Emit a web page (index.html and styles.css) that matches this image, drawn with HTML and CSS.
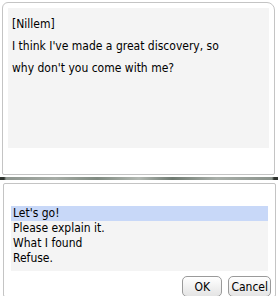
FILE: index.html
```html
<!DOCTYPE html>
<html lang="en">
<head>
    <meta charset="UTF-8">
    <title>Dialogue</title>
    <link rel="stylesheet" href="styles.css">
</head>
<body>
    <div class="message-panel">
        <div class="message-text">
            <p>[Nillem]</p>
            <p>I think I've made a great discovery, so</p>
            <p>why don't you come with me?</p>
        </div>
    </div>

    <div class="divider"></div>

    <div class="choice-panel">
        <ul class="choices">
            <li class="selected">Let's go!</li>
            <li>Please explain it.</li>
            <li>What I found</li>
            <li>Refuse.</li>
        </ul>
        <div class="buttons">
            <button class="ok">OK</button>
            <button>Cancel</button>
        </div>
    </div>
</body>
</html>
```

FILE: styles.css
```css
body {
    margin: 0;
    width: 278px;
    height: 296px;
    overflow: hidden;
    background: #ffffff;
    font-family: "DejaVu Sans Condensed", "DejaVu Sans", sans-serif;
    font-size: 12px;
    color: #000000;
}

.message-panel {
    margin: 2px 3px 0 2px;
    height: 173px;
    box-sizing: border-box;
    border: 1px solid #c4c4c4;
    border-radius: 6px 8px 2px 2px;
    padding: 5px 5px 0 5px;
}

.message-text {
    background: #f4f4f4;
    height: 140px;
    padding: 5px 4px 0 4px;
    box-sizing: border-box;
}

.message-text p {
    margin: 0;
    line-height: 22px;
}

.divider {
    height: 3px;
    margin: 2px 0 3px 0;
    background: linear-gradient(90deg, #2e332e 0, #2e332e 4px, #8e968f 6px, #a6aca6 20%, #7f8a80 35%, #b2b8b2 50%, #6f7a71 62%, #a9afa9 78%, #8b938c calc(100% - 6px), #2e332e calc(100% - 4px));
}

.choice-panel {
    margin: 0 2px 0 3px;
    height: 114px;
    box-sizing: border-box;
    border: 1px solid #c4c4c4;
    border-radius: 2px;
    padding: 22px 7px 0 7px;
}

.choices {
    list-style: none;
    margin: 0;
    padding: 0 0 5px 0;
    background: #f4f4f4;
    height: 65px;
    box-sizing: border-box;
}

.choices li {
    line-height: 15px;
    padding-left: 2px;
}

.choices li.selected {
    background: #c8d8f8;
}

.buttons {
    display: flex;
    justify-content: flex-end;
    gap: 6px;
    margin: 5px -3px 0 0;
}

.buttons button {
    font-family: inherit;
    font-size: 12px;
    height: 21px;
    padding: 0 2px;
    border: 1px solid #9a9a9a;
    border-radius: 5px;
    background: linear-gradient(#ffffff, #e4e4e4);
    color: #000000;
}

.buttons .ok {
    width: 40px;
}
```
